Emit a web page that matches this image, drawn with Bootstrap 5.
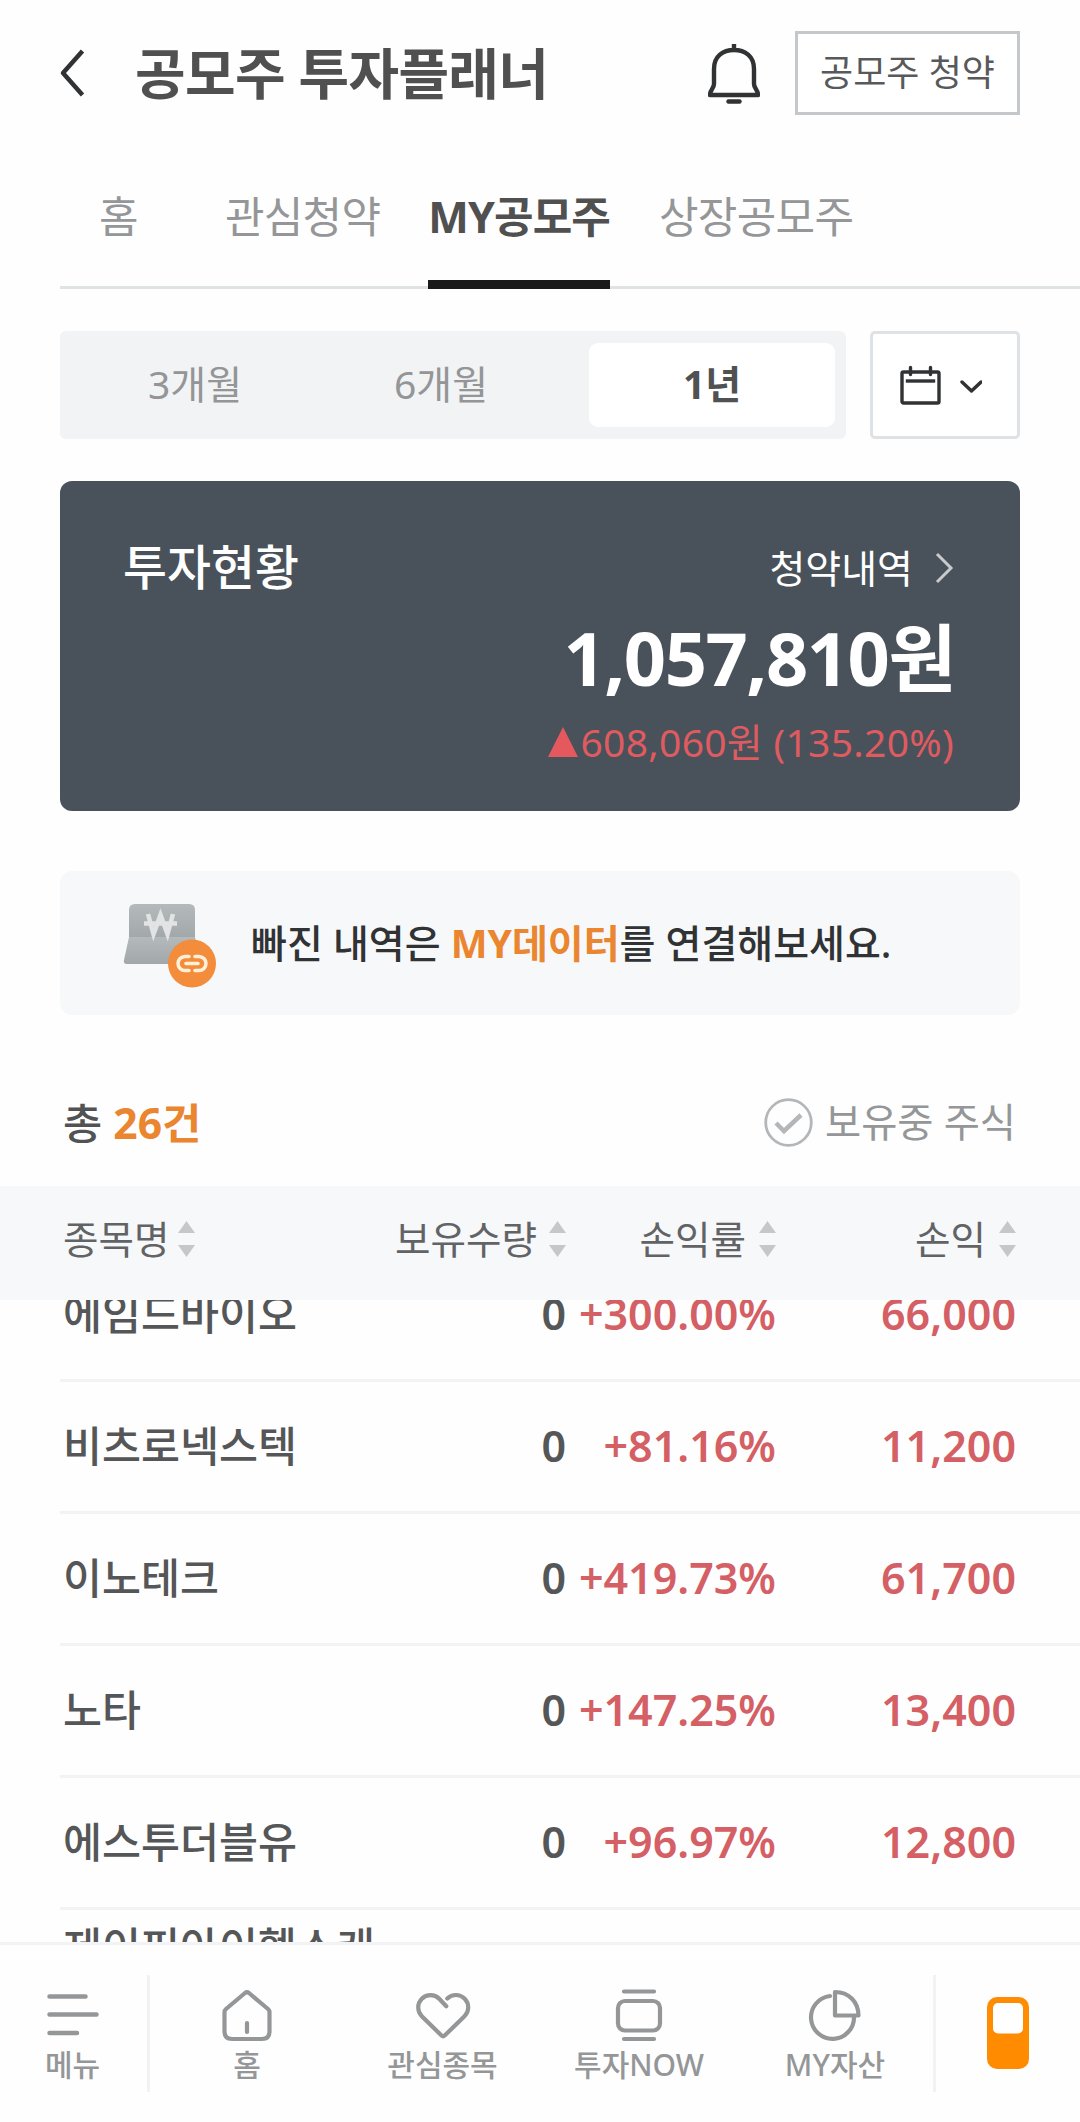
<!DOCTYPE html>
<html lang="ko">
<head>
<meta charset="utf-8">
<meta name="viewport" content="width=device-width, initial-scale=1">
<title>공모주 투자플래너</title>
<link href="https://cdn.jsdelivr.net/npm/bootstrap@5.3.0/dist/css/bootstrap.min.css" rel="stylesheet">
<style>
  body{font-family:"Noto Sans","Noto Sans CJK KR",sans-serif;color:#515253;background:#fefefe;width:1080px;height:2122px;overflow:hidden;line-height:1}
  svg{display:block;flex:none}
  .t{white-space:nowrap;line-height:60px}
  .app-head{height:146px;padding:0 60px 0 59px}
  .app-title{font-size:55px;font-weight:700;color:#505050;margin-left:50px;letter-spacing:-.65px}
  .bell{margin-right:35px}
  .apply-btn{width:225px;height:84px;border:3px solid #c5c8cb;border-radius:0;font-size:36px;color:#58595a;background:#fff;padding:0}
  .tabs{margin-left:60px;height:143px;border-bottom:3px solid #dfe3e4;font-size:43px;color:#959697;letter-spacing:-.7px;padding-left:39px}
  .tabs .tab{height:143px;padding-top:41px;border-bottom:9px solid transparent}
  .tabs .on{color:#505050;font-weight:700;border-color:#1a1a1a;letter-spacing:-.9px}
  .filters{padding:42px 60px 0;gap:24px}
  .seg{width:786px;height:108px;background:#f1f3f5;border-radius:6px;padding:12px 11px 12px 12px;font-size:39px;color:#949596}
  .seg .on{background:#fff;border-radius:9px;color:#505152;font-weight:700}
  .seg>div{height:84px;width:246px;padding-bottom:2px}
  .cal-btn{width:150px;height:108px;border:3px solid #dfe2e5;border-radius:5px;background:#fff;padding:0 8px 0 0}
  .status{margin:42px 60px 0;height:330px;border-radius:12px;background:#49525a;color:#fff;padding:54px 65px 0 63px}
  .status-title{font-size:47.8px;font-weight:500}
  .status-link{font-size:39px;padding-top:3px}
  .status .amount{font-size:74px;font-weight:700;line-height:100px;letter-spacing:-1.5px;padding-top:10px}
  .status .change{font-size:39px;color:#df5b60;letter-spacing:.3px;margin-top:4px;padding-right:1px}
  .banner{margin:60px 60px 0;height:144px;border-radius:12px;background:#f7f8fa;color:#303234;font-size:39px;font-weight:500;padding-left:63px}
  .orange{color:#ea8530}
  .count{height:171px;padding:77px 64px 0 63px}
  .total{font-size:42.6px;font-weight:500}
  .own{font-size:39.3px;color:#959697;height:60px}
  .thead-bar{height:114px;background:#f7f8fa;font-size:38.6px;color:#626365;padding:0 63px 8px}
  .list{height:642px;overflow:hidden}
  .item{margin-left:60px;padding:0 64px 2px 3px;height:132px;border-bottom:3px solid #f1f3f4;font-size:42.4px;font-weight:500;color:#555657}
  .item:first-child{margin-top:-50px}
  .num{font-size:43px;font-weight:600;text-align:right}
  .up{color:#d45f64}
  .c1{width:330px}.c2{width:173px}.c3{width:210px}.c4{width:240px}
  .tall{height:200px;line-height:52px;padding-top:11px}
  .dock{height:180px;border-top:3px solid #f1f3f4;font-size:30px;color:#949698;background:#fefefe;font-weight:500}
  .dock .cell{padding-top:41px;height:177px;width:196px}
  .dock .menu-cell{width:147px;padding-left:45px}
  .dock .t{line-height:38px}
  .dock .ico{height:60px}
  .vline{width:3px;height:117px;background:#f0f2f3;margin-top:30px}
  .wallet{padding-top:52px}
</style>
</head>
<body>
<header class="app-head d-flex align-items-center">
  <svg width="26" height="48" viewBox="0 0 26 48" fill="none" stroke="#303234" stroke-width="4.5"><path d="M23.500 2 4 24 23.500 46" stroke-linejoin="round"/></svg>
  <h1 class="app-title t mb-0">공모주 투자플래너</h1>
  <svg class="bell ms-auto" width="52" height="62" viewBox="0 0 52 62" fill="none" stroke="#303234" stroke-width="4.4" stroke-linejoin="round"><path d="M26 2v6M6 27C6 14 15 8 26 8s20 6 20 19v15c0 4 4 6 4 11H2c0-5 4-7 4-11Z"/><path d="M20.500 59.500h11" stroke-linecap="round"/></svg>
  <button class="apply-btn t">공모주 청약</button>
</header>
<nav class="tabs d-flex">
  <div class="tab t">홈</div>
  <div class="tab t" style="margin-left:87px">관심청약</div>
  <div class="tab t on" style="margin-left:48px">MY공모주</div>
  <div class="tab t" style="margin-left:49px">상장공모주</div>
</nav>
<section class="filters d-flex">
  <div class="seg d-flex">
    <div class="d-flex align-items-center justify-content-center t">3개월</div>
    <div class="d-flex align-items-center justify-content-center t">6개월</div>
    <div class="on d-flex align-items-center justify-content-center t ms-auto">1년</div>
  </div>
  <button class="cal-btn d-flex align-items-center justify-content-center">
    <svg width="82" height="40" viewBox="0 0 82 40" fill="none" stroke="#303234" stroke-width="3.4" stroke-linecap="round"><rect x="2" y="7" width="37" height="31" rx="1.500"/><path d="M10.500 2.500v7M30.500 2.500v7"/><path d="M7.500 16h26" stroke-linecap="square"/><path d="m62 17 9.500 9 9.500-9" stroke-linejoin="round"/></svg>
  </button>
</section>
<section class="status">
  <div class="d-flex align-items-center justify-content-between">
    <div class="t status-title">투자현황</div>
    <div class="t status-link d-flex align-items-center">청약내역<svg style="margin-left:22px" width="20" height="32" viewBox="0 0 20 32" fill="none" stroke="#c8cbce" stroke-width="3"><path d="m2 2 14 14L2 30"/></svg></div>
  </div>
  <div class="t text-end amount">1,057,810원</div>
  <div class="t d-flex align-items-center justify-content-end change"><svg width="30" height="30" viewBox="0 0 30 30"><path d="M15 0 30 30H0Z" fill="#e5595e"/></svg><span style="margin-left:2px">608,060원 (135.20%)</span></div>
</section>
<section class="banner d-flex align-items-center">
  <svg width="96" height="90" viewBox="0 0 96 90"><defs><linearGradient id="g" x2="0" y2="1"><stop stop-color="#b4b9bc"/><stop offset="1" stop-color="#a2a7aa"/></linearGradient></defs><path d="M12 6h54q6 0 6 6v28H6V12q0-6 6-6Z" fill="url(#g)"/><path d="M6 39h66l5 22q1 5-4 5H4q-4 0-3-4Z" fill="url(#g)"/><g fill="none" stroke="#e1e3e4" stroke-width="4.600"><path d="m25 16 5.500 20 7-19 7 19L50 16M21 25.500h33"/></g><circle cx="69" cy="65.500" r="24" fill="#f38c3b"/><g fill="none" stroke="#fff0d8" stroke-width="3.600" stroke-linecap="round"><path d="M66 58.500h-4a7 7 0 0 0 0 14h4M72 58.500h4a7 7 0 0 1 0 14h-4M63 65.500h12"/></g></svg>
  <div class="t" style="margin-left:32px">빠진 내역은 <span class="orange fw-bold">MY데이터</span>를 연결해보세요.</div>
</section>
<section class="count d-flex justify-content-between">
  <div class="t total">총 <span class="orange fw-bold">26건</span></div>
  <div class="t own d-flex align-items-center"><svg style="margin-right:12px" width="49" height="49" viewBox="0 0 49 49" fill="none" stroke="#b4b7ba"><circle cx="24.500" cy="24.500" r="22.800" stroke-width="2.800"/><path d="m12 25 8 8 17-16" stroke-width="4.500"/></svg>보유중 주식</div>
</section>
<div class="thead-bar d-flex align-items-center">
  <div class="t c1 d-flex align-items-center">종목명<svg style="margin-left:9px" width="17" height="36" viewBox="0 0 17 36" fill="#c5c8ca"><path id="s" d="M8.500 0 17 12H0ZM0 24h17L8.500 36Z"/></svg></div>
  <div class="t c2 d-flex align-items-center justify-content-end">보유수량<svg style="margin-left:12px" width="17" height="36" viewBox="0 0 17 36" fill="#c5c8ca"><use href="#s"/></svg></div>
  <div class="t c3 d-flex align-items-center justify-content-end">손익률<svg style="margin-left:13px" width="17" height="36" viewBox="0 0 17 36" fill="#c5c8ca"><use href="#s"/></svg></div>
  <div class="t c4 d-flex align-items-center justify-content-end">손익<svg style="margin-left:13px" width="17" height="36" viewBox="0 0 17 36" fill="#c5c8ca"><use href="#s"/></svg></div>
</div>
<section class="list">
  <div class="item d-flex align-items-center"><div class="c1 t">에임드바이오</div><div class="c2 num">0</div><div class="c3 num up">+300.00%</div><div class="c4 num up">66,000</div></div>
  <div class="item d-flex align-items-center"><div class="c1 t">비츠로넥스텍</div><div class="c2 num">0</div><div class="c3 num up">+81.16%</div><div class="c4 num up">11,200</div></div>
  <div class="item d-flex align-items-center"><div class="c1 t">이노테크</div><div class="c2 num">0</div><div class="c3 num up">+419.73%</div><div class="c4 num up">61,700</div></div>
  <div class="item d-flex align-items-center"><div class="c1 t">노타</div><div class="c2 num">0</div><div class="c3 num up">+147.25%</div><div class="c4 num up">13,400</div></div>
  <div class="item d-flex align-items-center"><div class="c1 t">에스투더블유</div><div class="c2 num">0</div><div class="c3 num up">+96.97%</div><div class="c4 num up">12,800</div></div>
  <div class="item tall">제이피아이헬스케<br>어</div>
</section>
<nav class="dock d-flex">
  <div class="cell menu-cell"><svg class="ico" width="56" height="60" viewBox="45 1986 56 60" stroke="#949698" stroke-width="4.500" stroke-linecap="round"><path d="M49.500 1996.500h36M49.500 2014.500h47M49.500 2033h27.500"/></svg><div class="t">메뉴</div></div>
  <div class="vline"></div>
  <div class="cell d-flex flex-column align-items-center" style="width:194px"><svg class="ico" width="60" height="60" viewBox="217 1986 60 60" fill="none" stroke="#949698" stroke-width="4.200" stroke-linejoin="round" stroke-linecap="round"><path d="M224.500 2012q0-1.500 1.500-3l19-16q2-1.500 4 0l19 16q1.500 1.500 1.500 3v19.500q0 7.500-7.500 7.500h-30q-7.500 0-7.500-7.500ZM247 2023v9"/></svg><div class="t">홈</div></div>
  <div class="cell d-flex flex-column align-items-center" style="width:197px"><svg class="ico" width="60" height="60" viewBox="413 1986 60 60" fill="none" stroke="#949698" stroke-width="4.200" stroke-linejoin="round" stroke-linecap="round"><path d="M446.300 2006.300 439.200 1998.800A12.300 12.300 0 0 0 421.800 2016.200L441.500 2035.500q1.600 1.500 3.200 0L464.500 2016.200A12.300 12.300 0 0 0 447.300 1998.500"/></svg><div class="t">관심종목</div></div>
  <div class="cell d-flex flex-column align-items-center"><svg class="ico" width="60" height="60" viewBox="609 1986 60 60" fill="none" stroke="#949698" stroke-width="4.200" stroke-linecap="round"><rect x="618" y="2001" width="42" height="29.500" rx="7"/><path d="M624 1991.500h30M624 2039h30"/></svg><div class="t">투자NOW</div></div>
  <div class="cell d-flex flex-column align-items-center"><svg class="ico" width="60" height="60" viewBox="806 1986 60 60" fill="none" stroke="#949698" stroke-width="4.200" stroke-linejoin="round" stroke-linecap="round"><path d="M836 1992v23.500h23.500C859.500 2002 850 1992 836 1992Z"/><path d="M831 1996a21.500 21.500 0 1 0 24 21"/></svg><div class="t">MY자산</div></div>
  <div class="vline"></div>
  <div class="wallet flex-fill d-flex justify-content-center"><svg width="42" height="72" viewBox="0 0 42 72"><rect width="42" height="72" rx="10" fill="#ff8b00"/><rect x="6" y="6" width="30" height="30.500" rx="5" fill="#fff"/></svg></div>
</nav>
<script src="https://cdn.jsdelivr.net/npm/bootstrap@5.3.0/dist/js/bootstrap.bundle.min.js"></script>
</body>
</html>
